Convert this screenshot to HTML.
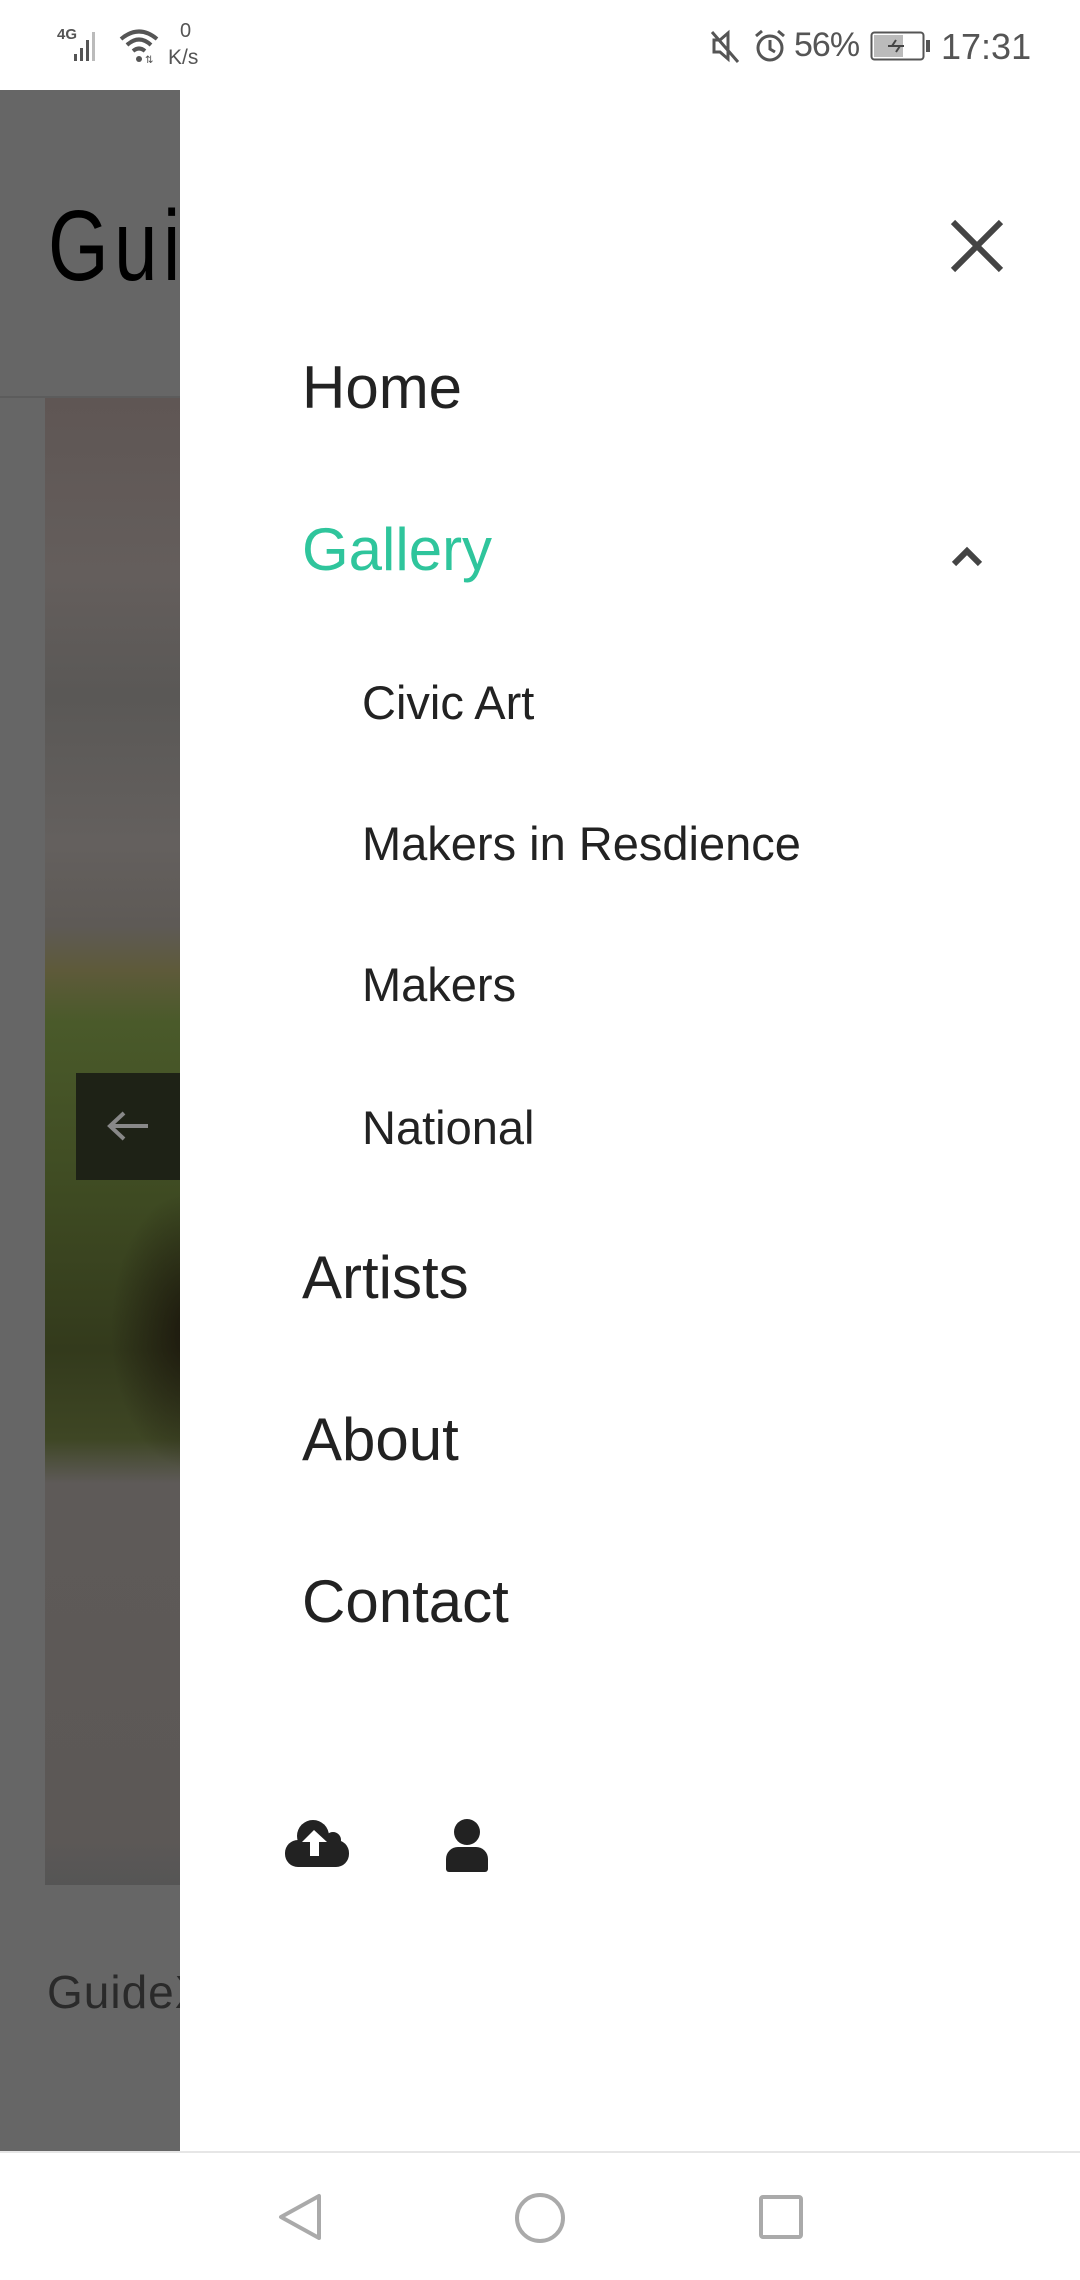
<!DOCTYPE html>
<html><head><meta charset="utf-8"><style>
*{margin:0;padding:0;box-sizing:border-box}
body{width:1080px;height:2280px;position:relative;overflow:hidden;background:#fff;font-family:"Liberation Sans",sans-serif;color:#222}
.a{position:absolute}
.nav{position:absolute;left:302px;font-size:60px;color:#222;line-height:1;white-space:nowrap}
.sub{position:absolute;left:362px;font-size:47px;color:#222;line-height:1;white-space:nowrap}
</style></head><body>
<!-- status bar -->
<div class="a" style="left:0;top:0;width:1080px;height:90px;background:#fff"></div>
<div class="a" style="left:57px;top:26px;font-size:15px;font-weight:bold;color:#555">4G</div>
<svg class="a" style="left:72px;top:28px" width="40" height="34" viewBox="0 0 40 34"><rect x="2" y="26" width="3" height="7" fill="#555"/><rect x="8" y="20" width="3" height="13" fill="#555"/><rect x="14" y="12" width="3" height="21" fill="#555"/><rect x="20" y="4" width="3" height="29" fill="#bbb"/></svg>
<svg class="a" style="left:118px;top:26px" width="44" height="38" viewBox="0 0 44 38"><path d="M3 13 Q21 -2 39 13" stroke="#555" stroke-width="4" fill="none"/><path d="M9 19 Q21 8 33 19" stroke="#555" stroke-width="4" fill="none"/><path d="M15 25 Q21 20 27 25" stroke="#555" stroke-width="4" fill="none"/><circle cx="21" cy="33" r="3" fill="#555"/><text x="27" y="37" font-size="10" fill="#555">⇅</text></svg>
<div class="a" style="left:180px;top:20px;font-size:20px;color:#555">0</div>
<div class="a" style="left:168px;top:46px;font-size:21px;color:#555">K/s</div>
<svg class="a" style="left:708px;top:28px" width="36" height="36" viewBox="0 0 36 36"><path d="M6 12h6l8-7v26l-8-7H6z" fill="none" stroke="#555" stroke-width="3"/><path d="M4 4l26 30" stroke="#555" stroke-width="3"/></svg>
<svg class="a" style="left:752px;top:28px" width="36" height="36" viewBox="0 0 36 36"><circle cx="18" cy="20" r="12" fill="none" stroke="#555" stroke-width="3"/><path d="M18 12v9l5 3" stroke="#555" stroke-width="3" fill="none"/><path d="M4 8l6-5M32 8l-6-5" stroke="#555" stroke-width="3"/></svg>
<div class="a" style="left:794px;top:26px;font-size:34px;color:#555;letter-spacing:-1px">56%</div>
<svg class="a" style="left:870px;top:31px" width="62" height="30" viewBox="0 0 62 30"><rect x="1.5" y="1.5" width="52" height="27" rx="3" fill="none" stroke="#555" stroke-width="2"/><rect x="4" y="4" width="29" height="22" fill="#bbb"/><rect x="56" y="9" width="4" height="12" fill="#555"/><path d="M18 15h16M26 9l-4 6h8l-4 6" stroke="#444" stroke-width="2" fill="none"/></svg>
<div class="a" style="left:941px;top:26px;font-size:36px;color:#555">17:31</div>

<!-- background page (dimmed, final colours) -->
<div class="a" style="left:0;top:90px;width:180px;height:2061px;background:#666;overflow:hidden">
  <div class="a" style="left:48px;top:99px;font-size:100px;color:#000;transform:scaleX(0.78);transform-origin:left top;white-space:nowrap;letter-spacing:7px">Guide</div>
  <div class="a" style="left:0;top:306px;width:180px;height:2px;background:#5c5c5c"></div>
  <div class="a" style="left:45px;top:308px;width:140px;height:1487px;background:linear-gradient(180deg,#5f5654 0%,#645e5c 12%,#5a5856 20%,#64605e 30%,#5e5a56 35.5%,#5e5a3a 38.5%,#4a5a2a 42%,#3e4a22 54%,#333a1c 64%,#3e4624 70%,#5e5a58 73%,#5c5856 97%,#555 100%)"></div>
  <div class="a" style="left:110px;top:1100px;width:80px;height:280px;background:radial-gradient(ellipse at right center,rgba(20,12,8,0.75),rgba(20,12,8,0) 70%)"></div>
  <div class="a" style="left:76px;top:983px;width:120px;height:107px;background:#1e2216"></div>
  <div class="a" style="left:47px;top:1875px;font-size:46px;color:#2a2a2a;letter-spacing:1px">GuideX</div>
</div>
<svg class="a" style="left:106px;top:1110px" width="44" height="32" viewBox="0 0 44 32"><path d="M42 16H4M18 3L4 16l14 13" stroke="#888" stroke-width="4" fill="none"/></svg>

<!-- drawer -->
<div class="a" style="left:180px;top:90px;width:900px;height:2061px;background:#fff"></div>
<svg class="a" style="left:950px;top:219px" width="54" height="54" viewBox="0 0 54 54"><path d="M3 3L51 51M51 3L3 51" stroke="#444" stroke-width="6"/></svg>
<div class="nav" style="top:358px">Home</div>
<div class="nav" style="top:520px;color:#2fc59c">Gallery</div>
<svg class="a" style="left:951px;top:545px" width="32" height="22" viewBox="0 0 32 22"><path d="M3 19L16 6l13 13" stroke="#444" stroke-width="6" fill="none"/></svg>
<div class="sub" style="top:679px">Civic Art</div>
<div class="sub" style="top:820px">Makers in Resdience</div>
<div class="sub" style="top:961px">Makers</div>
<div class="sub" style="top:1104px">National</div>
<div class="nav" style="top:1248px">Artists</div>
<div class="nav" style="top:1410px">About</div>
<div class="nav" style="top:1572px">Contact</div>
<svg class="a" style="left:284px;top:1818px" width="66" height="50" viewBox="0 0 66 50"><circle cx="29" cy="18" r="16" fill="#222"/><circle cx="49" cy="22" r="8" fill="#222"/><rect x="1" y="22" width="64" height="27" rx="13" fill="#222"/><path d="M30 12l-12 12h8v14h9V24h8z" fill="#fff"/></svg>
<svg class="a" style="left:444px;top:1819px" width="46" height="54" viewBox="0 0 46 54"><circle cx="23" cy="13" r="13" fill="#222"/><path d="M2 50V40a12 12 0 0 1 12-12h18a12 12 0 0 1 12 12v10a3 3 0 0 1-3 3H5a3 3 0 0 1-3-3z" fill="#222"/></svg>

<!-- nav bar -->
<div class="a" style="left:0;top:2151px;width:1080px;height:2px;background:#e6e6e6"></div>
<div class="a" style="left:0;top:2153px;width:1080px;height:127px;background:#fff"></div>
<svg class="a" style="left:276px;top:2192px" width="50" height="50" viewBox="0 0 50 50"><path d="M43 4v42L5 25z" fill="none" stroke="#aaa" stroke-width="4" stroke-linejoin="round"/></svg>
<svg class="a" style="left:514px;top:2192px" width="52" height="52" viewBox="0 0 52 52"><circle cx="26" cy="26" r="23" fill="none" stroke="#aaa" stroke-width="4"/></svg>
<svg class="a" style="left:758px;top:2194px" width="46" height="46" viewBox="0 0 46 46"><rect x="3" y="3" width="40" height="40" rx="2" fill="none" stroke="#aaa" stroke-width="4"/></svg>
</body></html>
